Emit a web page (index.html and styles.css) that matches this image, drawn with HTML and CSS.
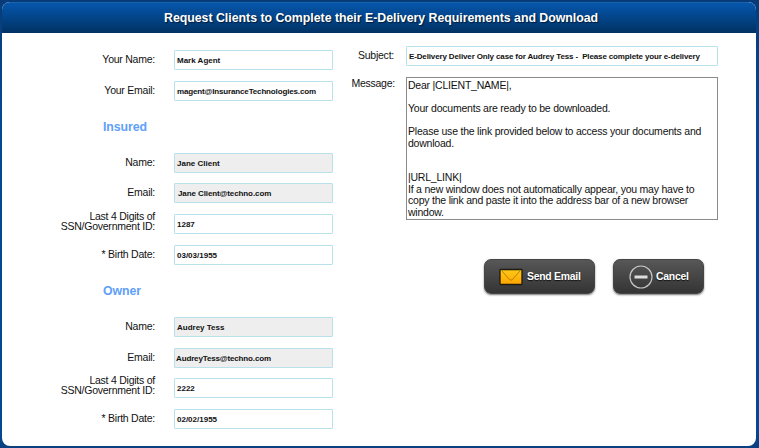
FILE: index.html
```html
<!DOCTYPE html>
<html lang="en">
<head>
<meta charset="utf-8">
<title>Request E-Delivery</title>
<link rel="stylesheet" href="styles.css">
</head>
<body>
<main class="panel">
  <header class="title">Request Clients to Complete their E-Delivery Requirements and Download</header>
  <div class="content">
    <section class="people">
      <div class="row"><span class="label">Your Name:</span><div class="field"><span>Mark Agent</span></div></div>
      <div class="row"><span class="label">Your Email:</span><div class="field agent-mail"><span>magent@InsuranceTechnologies.com</span></div></div>
      <h2 class="insured">Insured</h2>
      <div class="row"><span class="label">Name:</span><div class="field locked"><span>Jane Client</span></div></div>
      <div class="row"><span class="label">Email:</span><div class="field locked jane-mail"><span>Jane Client@techno.com</span></div></div>
      <div class="row"><span class="label two">Last 4 Digits of<br>SSN/Government ID:</span><div class="field"><span>1287</span></div></div>
      <div class="row"><span class="label">* Birth Date:</span><div class="field"><span>03/03/1955</span></div></div>
      <h2 class="owner">Owner</h2>
      <div class="row"><span class="label">Name:</span><div class="field locked"><span>Audrey Tess</span></div></div>
      <div class="row"><span class="label">Email:</span><div class="field locked audrey-mail"><span>AudreyTess@techno.com</span></div></div>
      <div class="row"><span class="label two">Last 4 Digits of<br>SSN/Government ID:</span><div class="field"><span>2222</span></div></div>
      <div class="row"><span class="label">* Birth Date:</span><div class="field"><span>02/02/1955</span></div></div>
    </section>
    <section class="mail">
      <div class="mail-row"><span class="label subject-label">Subject:</span><div class="field subject">E-Delivery Deliver Only case for Audrey Tess -&nbsp; Please complete your e-delivery</div></div>
      <div class="mail-row message-row"><span class="label message-label">Message:</span><div class="message">Dear |CLIENT_NAME|,<br><br>Your documents are ready to be downloaded.<br><br>Please use the link provided below to access your documents and<br>download.<br><br><br>|URL_LINK|<br>If a new window does not automatically appear, you may have to<br>copy the link and paste it into the address bar of a new browser<br>window.</div></div>
      <div class="actions">
        <button class="send"><svg width="24" height="18" viewBox="0 0 24 18"><defs><linearGradient id="gold" x2="0" y2="1"><stop stop-color="#ffca18"/><stop offset="1" stop-color="#ffa500"/></linearGradient></defs><rect x="1" y="1.5" width="22" height="15" rx=".6" fill="url(#gold)" stroke="#201b10" stroke-width="1.3"/><path d="M3 3L10.5 11.5Q12 13 13.5 11.5L21 3" fill="none" stroke="#a66e00" stroke-width=".8"/></svg><span>Send Email</span></button>
        <button class="cancel"><svg width="24" height="24" viewBox="0 0 24 24"><circle cx="12" cy="12" r="11" fill="none" stroke="#c6c6c6" stroke-width="1.2"/><path d="M5.5 12H18.5" stroke="#ddd" stroke-width="3"/></svg><span>Cancel</span></button>
      </div>
    </section>
  </div>
</main>
</body>
</html>
```
FILE: styles.css
```css
* { box-sizing: border-box; }
body {
  margin: 0;
  width: 759px;
  height: 448px;
  padding: 2px 3px 2px 2px;
  overflow: hidden;
  background: linear-gradient(#083c78, #034895 120px, #034895 430px, #0b407f);
  font-family: "Liberation Sans", Arial, sans-serif;
  color: #111;
}
.panel {
  height: 444px;
  border-radius: 8px;
  overflow: hidden;
  background: #fff;
}
.title {
  height: 31px;
  border-top: 1px solid #1762ac;
  background: linear-gradient(#0656ac, #003264);
  color: #fff;
  font-size: 12.35px;
  letter-spacing: -0.02px;
  font-weight: bold;
  line-height: 30px;
  padding-left: 162px;
  white-space: nowrap;
  text-shadow: 1px 1px 1px #001c3c;
}
.content { display: flex; }
.people { width: 331px; padding-top: 17px; }
.row {
  display: grid;
  grid-template-columns: 153px 159px;
  column-gap: 19px;
  height: 20px;
  margin-bottom: 10.8px;
}
.label {
  font-size: 10.5px;
  letter-spacing: -0.24px;
  line-height: 19.5px;
  text-align: right;
  white-space: nowrap;
}
.two { line-height: 10px; margin-top: -3px; }
.field {
  height: 20px;
  border: 1px solid #b9e1ec;
  border-radius: 1px;
  background: #fff;
  padding-left: 2px;
  font-size: 8px;
  font-weight: bold;
  line-height: 19px;
  white-space: nowrap;
  color: #111;
}
.locked { background: #eee; }
.agent-mail { letter-spacing: -0.15px; }
.jane-mail { padding-left: 3px; letter-spacing: -0.1px; }
.audrey-mail { padding-left: 1px; letter-spacing: -0.14px; }
h2 {
  margin: 0 0 15.5px 101px;
  padding-top: 8px;
  height: 25.5px;
  font-size: 12.3px;
  letter-spacing: -0.08px;
  line-height: 15px;
  color: #60a0f8;
}
.owner { padding-top: 8.7px; }
.mail { padding-top: 13px; }
.mail-row { display: flex; }
.subject-label { width: 61px; margin-right: 12px; }
.subject { width: 312px; letter-spacing: -0.135px; }
.message-row { margin-top: 11px; }
.message-label { width: 62px; margin-right: 11px; line-height: 12px; }
.message {
  width: 312px;
  height: 143px;
  border: 1px solid #8a8a8a;
  padding: 2px 0 0 1px;
  font-size: 10.5px;
  letter-spacing: -0.22px;
  line-height: 11.5px;
  white-space: nowrap;
}
.actions { display: flex; gap: 18px; margin: 39px 0 0 151px; }
button {
  display: flex;
  align-items: center;
  height: 35px;
  border: 1px solid #454545;
  border-radius: 7px;
  background: linear-gradient(#575757, #343434);
  box-shadow: 0 1px 2px #777;
  padding: 0 0 0 15px;
  font: bold 10.4px "Liberation Sans", Arial, sans-serif;
  letter-spacing: -0.25px;
  color: #fff;
  text-shadow: 0 1px 1px #111;
  white-space: nowrap;
}
.send { width: 111px; gap: 4px; padding-left: 14px; }
.cancel { width: 91px; gap: 3px; }
```
